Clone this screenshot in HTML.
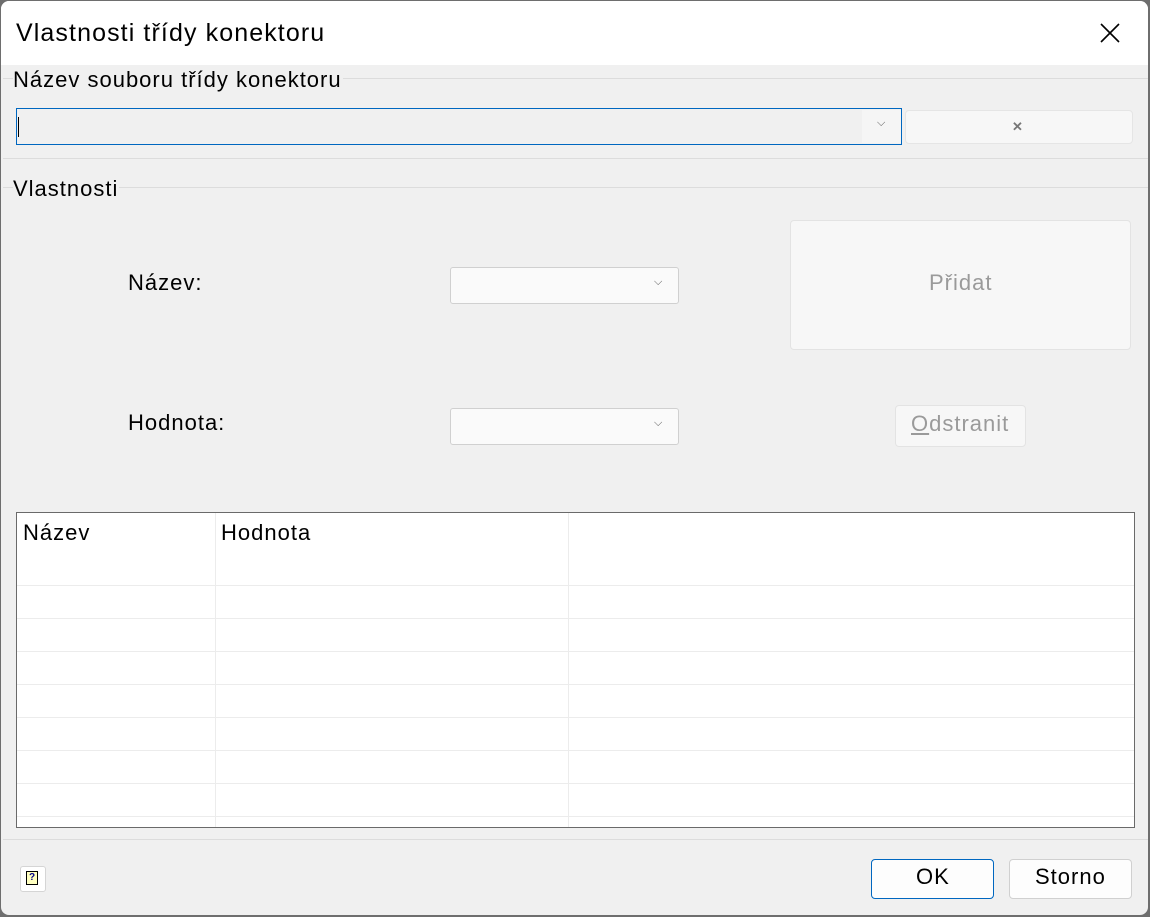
<!DOCTYPE html>
<html><head><meta charset="utf-8"><style>
*{box-sizing:border-box;margin:0;padding:0}
body{width:1150px;height:917px;background:#6e6e6e;font-family:"Segoe UI","Liberation Sans",sans-serif;position:relative;overflow:hidden}
.win{position:absolute;left:1px;top:1px;width:1147px;height:914px;background:#f0f0f0;border-radius:8px;overflow:hidden}
.tb{position:absolute;left:0;top:0;width:100%;height:64px;background:#fff}
.a{position:absolute}
.t{position:absolute;font-size:22px;letter-spacing:1px;color:#000;white-space:nowrap}
.hl{position:absolute;height:1px;background:#dcdcdc}
.combo{position:absolute;background:#fafafa;border:1px solid #d0d0d0;border-radius:3px}
.chev{position:absolute;font-size:11px;color:#555}
</style></head><body><div class="win">
<div class="tb"></div>
<div class="t" style="left:15px;top:18px;font-size:25px;letter-spacing:1.1px">Vlastnosti třídy konektoru</div>
<svg class="a" style="left:1099px;top:22px" width="20" height="20"><path d="M1 1L19 19M19 1L1 19" stroke="#000" stroke-width="1.6"/></svg>
<div class="hl" style="left:2px;top:77px;width:10px"></div>
<div class="hl" style="left:342px;top:77px;width:805px"></div>
<div class="t" style="left:12px;top:66px">Název souboru třídy konektoru</div>
<div class="a" style="left:15px;top:107px;width:886px;height:37px;border:1px solid #0067c0;background:#f0f0f0"></div>
<div class="a" style="left:17px;top:116px;width:1px;height:20px;background:#000"></div>
<div class="a" style="left:861px;top:109px;width:39px;height:33px;background:#f5f5f5"></div>
<div class="chev" style="left:876px;top:116px">⌵</div>
<div class="a" style="left:904px;top:109px;width:228px;height:34px;background:#f7f7f7;border:1px solid #e5e5e5;border-radius:4px"></div>
<div class="a" style="left:1011px;top:118px;font-size:13px;color:#777;font-weight:bold">✕</div>
<div class="hl" style="left:2px;top:157px;width:1145px"></div>
<div class="hl" style="left:2px;top:186px;width:10px"></div>
<div class="hl" style="left:118px;top:186px;width:1029px"></div>
<div class="t" style="left:12px;top:175px">Vlastnosti</div>
<div class="t" style="left:127px;top:269px">Název:</div>
<div class="t" style="left:127px;top:409px">Hodnota:</div>
<div class="combo" style="left:449px;top:266px;width:229px;height:37px"></div>
<div class="chev" style="left:653px;top:275px">⌵</div>
<div class="combo" style="left:449px;top:407px;width:229px;height:37px"></div>
<div class="chev" style="left:653px;top:416px">⌵</div>
<div class="a" style="left:789px;top:219px;width:341px;height:130px;background:#f7f7f7;border:1px solid #e3e3e3;border-radius:4px"></div>
<div class="t" style="left:928px;top:269px;color:#9a9a9a">Přidat</div>
<div class="a" style="left:894px;top:404px;width:131px;height:42px;background:#f7f7f7;border:1px solid #e3e3e3;border-radius:4px"></div>
<div class="t" style="left:910px;top:410px;color:#9a9a9a"><u>O</u>dstranit</div>
<div class="a" style="left:15px;top:511px;width:1119px;height:316px;background:#fff;border:1px solid #6a6a6a">
<div class="a" style="left:198px;top:0;width:1px;height:314px;background:#ececec"></div>
<div class="a" style="left:551px;top:0;width:1px;height:314px;background:#ececec"></div>
<div class="hl" style="left:0;top:72px;width:1117px;background:#ececec"></div>
<div class="hl" style="left:0;top:105px;width:1117px;background:#ececec"></div>
<div class="hl" style="left:0;top:138px;width:1117px;background:#ececec"></div>
<div class="hl" style="left:0;top:171px;width:1117px;background:#ececec"></div>
<div class="hl" style="left:0;top:204px;width:1117px;background:#ececec"></div>
<div class="hl" style="left:0;top:237px;width:1117px;background:#ececec"></div>
<div class="hl" style="left:0;top:270px;width:1117px;background:#ececec"></div>
<div class="hl" style="left:0;top:303px;width:1117px;background:#ececec"></div>
<div class="t" style="left:6px;top:7px">Název</div>
<div class="t" style="left:204px;top:7px">Hodnota</div>
</div>
<div class="hl" style="left:2px;top:838px;width:1145px"></div>
<div class="a" style="left:19px;top:865px;width:26px;height:26px;background:#fff;border:1px solid #d5d5d5;border-radius:3px"></div>
<div class="a" style="left:25px;top:870px;width:12px;height:14px;border:1px solid #000;background:#ffffc0;font-size:10px;font-weight:bold;color:#00008b;text-align:center;line-height:12px">?</div>
<div class="a" style="left:870px;top:858px;width:123px;height:40px;background:#fdfdfd;border:1px solid #0067c0;border-radius:4px"></div>
<div class="t" style="left:915px;top:863px">OK</div>
<div class="a" style="left:1008px;top:858px;width:123px;height:40px;background:#fdfdfd;border:1px solid #d0d0d0;border-radius:4px"></div>
<div class="t" style="left:1034px;top:863px">Storno</div>
</div></body></html>
